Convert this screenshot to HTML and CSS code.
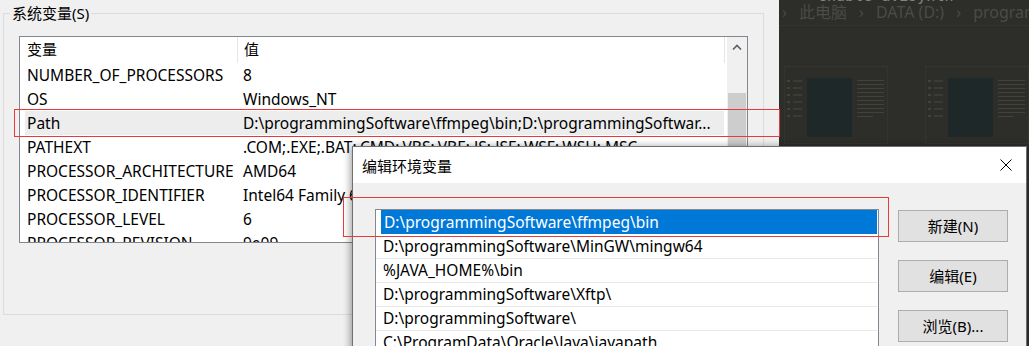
FILE: index.html
```html
<!DOCTYPE html>
<html lang="zh-CN">
<head>
    <meta charset="UTF-8">
    <title>编辑环境变量</title>
    <link rel="stylesheet" href="styles.css">
</head>
<body>
    <div class="screen">
        <div class="main-window">
            <div class="group">
                <div class="group-title">系统变量(S)</div>
                <div class="list-view">
                    <div class="lv-body">
                        <div class="lv-header">
                            <div class="col-name">变量</div>
                            <div class="col-value">值</div>
                        </div>
                        <div class="lv-row"><div class="col-name">NUMBER_OF_PROCESSORS</div><div class="col-value">8</div></div>
                        <div class="lv-row"><div class="col-name">OS</div><div class="col-value">Windows_NT</div></div>
                        <div class="lv-row selected"><div class="col-name">Path</div><div class="col-value">D:\programmingSoftware\ffmpeg\bin;D:\programmingSoftwar...</div></div>
                        <div class="lv-row"><div class="col-name">PATHEXT</div><div class="col-value">.COM;.EXE;.BAT;.CMD;.VBS;.VBE;.JS;.JSE;.WSF;.WSH;.MSC</div></div>
                        <div class="lv-row"><div class="col-name">PROCESSOR_ARCHITECTURE</div><div class="col-value">AMD64</div></div>
                        <div class="lv-row"><div class="col-name">PROCESSOR_IDENTIFIER</div><div class="col-value">Intel64 Family 6 Model 158 Stepping 9, GenuineIntel</div></div>
                        <div class="lv-row"><div class="col-name">PROCESSOR_LEVEL</div><div class="col-value">6</div></div>
                        <div class="lv-row"><div class="col-name">PROCESSOR_REVISION</div><div class="col-value">9e09</div></div>
                    </div>
                    <div class="scrollbar">
                        <div class="scroll-up">
                            <svg width="10" height="6" viewBox="0 0 10 6"><path d="M1 5.5 L5 1.5 L9 5.5" fill="none" stroke="#606060" stroke-width="1.6"/></svg>
                        </div>
                        <div class="scroll-thumb"></div>
                    </div>
                </div>
            </div>
        </div>

        <div class="desktop">
            <div class="ghost-title"><span>enable-avisynth</span></div>
            <div class="breadcrumb">
                <span>›</span><span>此电脑</span><span>›</span><span>DATA (D:)</span><span>›</span><span>program</span>
            </div>
            <div class="thumbs">
                <div class="thumb">
                    <div class="thumb-nav"><i></i><i></i><i></i><i></i><i></i><i></i></div>
                    <div class="thumb-pic"></div>
                    <div class="thumb-text"><i></i><i></i><i></i><i></i><i></i><i></i><i></i><i></i><i></i><i class="short"></i></div>
                </div>
                <div class="thumb">
                    <div class="thumb-nav"><i></i><i></i><i></i><i></i><i></i><i></i></div>
                    <div class="thumb-pic"></div>
                    <div class="thumb-text"><i></i><i></i><i></i><i></i><i></i><i></i><i></i><i></i><i></i><i class="short"></i></div>
                </div>
            </div>
        </div>

        <div class="dialog">
            <div class="dialog-title">
                <span>编辑环境变量</span>
                <svg class="close" width="12" height="12" viewBox="0 0 12 12"><path d="M0.5 0.5 L11.5 11.5 M11.5 0.5 L0.5 11.5" stroke="#000" stroke-width="1"/></svg>
            </div>
            <div class="dialog-body">
                <div class="path-list">
                    <div class="path-item selected"><span>D:\programmingSoftware\ffmpeg\bin</span></div>
                    <div class="path-item">D:\programmingSoftware\MinGW\mingw64</div>
                    <div class="path-item">%JAVA_HOME%\bin</div>
                    <div class="path-item">D:\programmingSoftware\Xftp\</div>
                    <div class="path-item">D:\programmingSoftware\</div>
                    <div class="path-item">C:\ProgramData\Oracle\Java\javapath</div>
                </div>
                <div class="buttons">
                    <div class="btn">新建(N)</div>
                    <div class="btn">编辑(E)</div>
                    <div class="btn">浏览(B)...</div>
                </div>
            </div>
        </div>

        <div class="mark mark-path"></div>
        <div class="mark mark-item"></div>
    </div>
</body>
</html>
```

FILE: styles.css
```css
body {
    margin: 0;
    font-family: 'Noto Sans', 'Noto Sans CJK SC', sans-serif;
    font-size: 15.5px;
    color: #000;
    background: #2d2d29;
}

.screen {
    position: relative;
    width: 1029px;
    height: 346px;
    overflow: hidden;
    display: flex;
}

/* left window */
.main-window {
    width: 779px;
    height: 346px;
    background: #f0f0f0;
    padding-top: 13px;
    box-sizing: border-box;
    flex-shrink: 0;
}

.group {
    margin-left: 3px;
    width: 761px;
    height: 302px;
    border: 1px solid #dcdcdc;
    box-sizing: border-box;
}

.group-title {
    width: fit-content;
    margin: -11px 0 0 6px;
    padding: 0 2px;
    line-height: 20px;
    height: 20px;
    font-size: 15px;
    background: #f0f0f0;
}

.list-view {
    margin: 13px 0 0 15px;
    width: 729px;
    height: 207px;
    border: 1px solid #828790;
    box-sizing: border-box;
    background: white;
    display: flex;
    overflow: hidden;
}

.lv-body {
    flex: 1;
    overflow: hidden;
}

.lv-header,
.lv-row {
    display: flex;
    white-space: nowrap;
}

.lv-header {
    height: 26px;
    line-height: 24px;
    font-size: 15px;
}

.lv-row {
    height: 24px;
    line-height: 24px;
}

.col-name {
    width: 217px;
    padding-left: 7px;
    box-sizing: border-box;
    flex-shrink: 0;
}

.col-value {
    width: 487px;
    padding-left: 6px;
    box-sizing: border-box;
    overflow: hidden;
    flex-shrink: 0;
}

.lv-header .col-name {
    border-right: 1px solid #e5e5e5;
    width: 218px;
}

.lv-header .col-value {
    border-right: 1px solid #e5e5e5;
    width: 487px;
}

.lv-row.selected {
    background: linear-gradient(to right, white 5px, #ededed 5px, #ededed 704px, white 704px);
}

.scrollbar {
    width: 20px;
    background: #f0f0f0;
    display: flex;
    flex-direction: column;
    align-items: center;
}

.scroll-up {
    height: 20px;
    display: flex;
    align-items: center;
    justify-content: center;
}

.scroll-thumb {
    margin-top: 36px;
    width: 18px;
    flex: 1;
    background: #cdcdcd;
}

/* background explorer window */
.desktop {
    flex: 1;
    background: #2d2d29;
    color: #4b4b47;
}

.ghost-title {
    height: 4px;
    overflow: hidden;
    padding-left: 39px;
}

.ghost-title span {
    display: block;
    margin-top: -12px;
    line-height: 16px;
    font-family: 'DejaVu Sans Mono', monospace;
    font-size: 15px;
    color: #85857f;
}

.breadcrumb {
    display: flex;
    gap: 12px;
    padding-left: 3px;
    height: 21px;
    line-height: 16px;
    font-size: 16px;
    border-bottom: 1px solid #33332f;
}

.breadcrumb span {
    white-space: nowrap;
}

.thumbs {
    display: flex;
    gap: 37px;
    margin: 40px 0 0 5px;
}

.thumb {
    width: 104px;
    height: 78px;
    flex-shrink: 0;
    border: 1px solid #35352f;
    box-sizing: border-box;
    display: flex;
    gap: 5px;
    padding: 11px 3px 0 2px;
}

.thumb-nav {
    width: 15px;
    display: flex;
    flex-direction: column;
    gap: 5px;
    padding-top: 2px;
}

.thumb-nav i {
    height: 2px;
    border-left: 3px solid #42423d;
    background: linear-gradient(to right, transparent 3px, #3a3a36 3px);
}

.thumb-pic {
    width: 45px;
    height: 59px;
    background: #1f2829;
}

.thumb-text {
    flex: 1;
    display: flex;
    flex-direction: column;
    gap: 3px;
    padding-top: 2px;
}

.thumb-text i {
    height: 1px;
    background: #42423d;
}

.thumb-text i.short {
    width: 60%;
}

/* dialog */
.dialog {
    position: absolute;
    left: 352px;
    top: 146px;
    width: 675px;
    height: 220px;
    border: 1px solid #707070;
    box-sizing: border-box;
    background: #f0f0f0;
    box-shadow: -2px 0 7px rgba(0, 0, 0, 0.35);
}

.dialog-title {
    height: 36px;
    background: white;
    display: flex;
    align-items: center;
    justify-content: space-between;
    padding: 0 14px 0 9px;
    font-size: 15px;
}

.dialog-body {
    display: flex;
    gap: 19px;
    padding: 26px 17px 0 22px;
}

.path-list {
    width: 504px;
    height: 160px;
    border: 1px solid #828790;
    box-sizing: border-box;
    background: white;
    padding-right: 1px;
}

.path-item {
    height: 24px;
    line-height: 24px;
    padding-left: 7px;
    white-space: nowrap;
    box-sizing: border-box;
}

.path-item + .path-item + .path-item {
    border-top: 1px solid #e8e8e8;
    line-height: 22px;
}

.path-item.selected {
    padding-left: 5px;
}

.path-item.selected span {
    display: block;
    background: #0078d7;
    color: white;
    padding-left: 3px;
}

.buttons {
    display: flex;
    flex-direction: column;
    gap: 18px;
    padding-top: 1px;
}

.btn {
    width: 110px;
    height: 32px;
    line-height: 30px;
    border: 1px solid #adadad;
    box-sizing: border-box;
    background: #e1e1e1;
    text-align: center;
    font-size: 15px;
}

/* red annotation boxes */
.mark {
    position: absolute;
    border: 1px solid #e8393b;
    box-sizing: border-box;
}

.mark-path {
    left: 14px;
    top: 109px;
    width: 766px;
    height: 28px;
}

.mark-item {
    left: 343px;
    top: 197px;
    width: 546px;
    height: 40px;
}
```
